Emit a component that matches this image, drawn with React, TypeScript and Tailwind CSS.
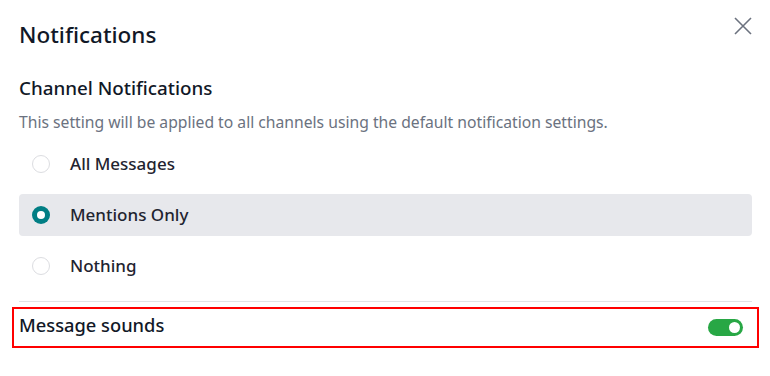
import { useState } from "react";

const options = [
  { id: "all", label: "All Messages" },
  { id: "mentions", label: "Mentions Only" },
  { id: "none", label: "Nothing" },
];

function Radio({ checked }: { checked: boolean }) {
  if (checked) {
    return (
      <span className="w-[18px] h-[18px] rounded-full bg-[#017e84] flex items-center justify-center">
        <span className="w-[8px] h-[8px] rounded-full bg-white" />
      </span>
    );
  }
  return <span className="w-[18px] h-[18px] rounded-full border border-[#dcdde1] bg-white" />;
}

export default function App() {
  const [selected, setSelected] = useState("mentions");
  const [sounds, setSounds] = useState(true);

  return (
    <div
      className="w-[770px] h-[376px] bg-white pl-[19px] pr-[18px] text-[#111827]"
      style={{ fontFamily: '"Noto Sans", sans-serif' }}
    >
      {/* Header */}
      <div className="flex justify-between items-start pt-[17px]">
        <h1 className="text-[22.5px] leading-[30px] font-medium mt-[3px]">Notifications</h1>
        <button className="w-[18px] h-[18px] text-[#6c727f]">
          <svg viewBox="0 0 18 18" className="w-[18px] h-[18px]" fill="none" stroke="currentColor" strokeWidth={1.6}>
            <path d="M1 1L17 17M17 1L1 17" />
          </svg>
        </button>
      </div>

      {/* Channel notifications */}
      <h2 className="mt-[25px] text-[18.8px] leading-[26px] font-medium">Channel Notifications</h2>
      <p className="mt-[11px] text-[15.7px] leading-[20px] text-[#6b7280]">
        This setting will be applied to all channels using the default notification settings.
      </p>

      <div className="mt-[11px] flex flex-col gap-[9px]">
        {options.map((opt) => (
          <button
            key={opt.id}
            onClick={() => setSelected(opt.id)}
            className={`h-[42px] flex items-center pl-[13px] rounded-[4px] text-left ${
              selected === opt.id ? "bg-[#e7e8ec]" : ""
            }`}
          >
            <Radio checked={selected === opt.id} />
            <span className="ml-[20px] text-[17px] font-medium text-[#1f2430]">{opt.label}</span>
          </button>
        ))}
      </div>

      <div className="mt-[14px] border-t border-[#e2e3e6]" />

      {/* Message sounds */}
      <div className="mt-[5px] -ml-[7px] -mr-[7px] h-[41px] border-2 border-[#ff0000] flex items-center justify-between pl-[5px] pr-[14px]">
        <span className="text-[18.3px] font-medium text-[#111827] -mt-[6px]">Message sounds</span>
        <button
          onClick={() => setSounds(!sounds)}
          className={`w-[35px] h-[17px] rounded-full flex items-center px-[3px] ${
            sounds ? "bg-[#28a745] justify-end" : "bg-[#d1d5db] justify-start"
          }`}
        >
          <span className="w-[11px] h-[11px] rounded-full bg-white" />
        </button>
      </div>
    </div>
  );
}
